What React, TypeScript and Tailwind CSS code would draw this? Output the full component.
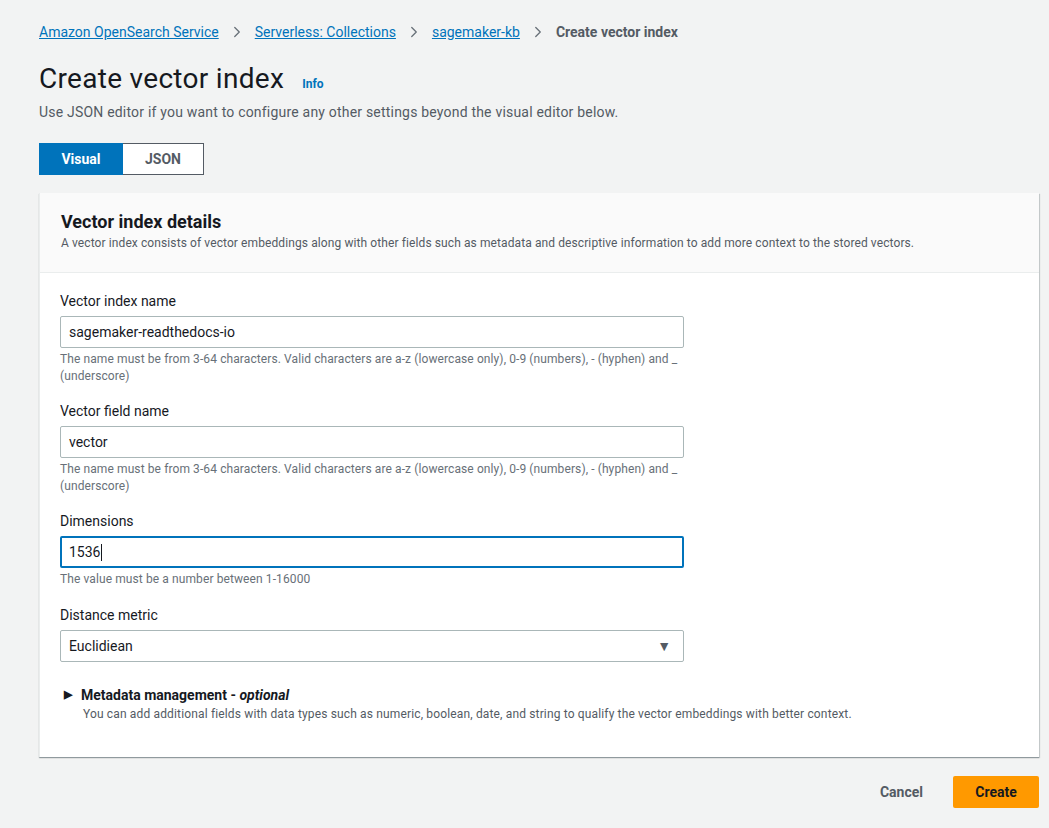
import { ChevronRight } from 'lucide-react';

type FieldProps = {
    label: string;
    value: string;
    hint?: string;
    focused?: boolean;
    select?: boolean;
};

const HINT =
    'The name must be from 3-64 characters. Valid characters are a-z (lowercase only), 0-9 (numbers), - (hyphen) and _ (underscore)';

function Field(props: FieldProps) {
    const { label, value, hint, focused, select } = props;
    return (
        <div className="flex flex-col">
            <label className="text-[14px] leading-[22px] text-[#16191f]">{label}</label>
            <div
                className={`mt-[4px] flex h-[32px] w-[624px] items-center justify-between rounded-[2px] bg-white pr-[12px] text-[14px] text-[#16191f] ${
                    focused ? 'border-2 border-[#0073bb] pl-[7px]' : 'border border-[#aab7b8] pl-[8px]'
                }`}
            >
                <span className="flex items-center">
                    {value}
                    {focused && <span className="ml-[1px] inline-block h-[17px] w-px bg-[#16191f]" />}
                </span>
                {select && <span className="text-[14px] text-[#545b64]">▼</span>}
            </div>
            {hint && (
                <p className="mt-[3px] w-[624px] text-[12px] leading-[17px] tracking-[0.1px] text-[#687078]">{hint}</p>
            )}
        </div>
    );
}

export default function App() {
    return (
        <div
            className="min-h-[828px] bg-[#f2f3f3] pl-[39px] pr-[10px] pt-[22px] text-[#16191f]"
            style={{ fontFamily: 'Roboto, "Liberation Sans", sans-serif' }}
        >
            <nav className="flex items-center gap-[9px] text-[14px] leading-[20px]">
                <a className="text-[#0073bb] underline">Amazon OpenSearch Service</a>
                <ChevronRight size={18} strokeWidth={1.75} className="text-[#687078]" />
                <a className="text-[#0073bb] underline">Serverless: Collections</a>
                <ChevronRight size={18} strokeWidth={1.75} className="text-[#687078]" />
                <a className="text-[#0073bb] underline">sagemaker-kb</a>
                <ChevronRight size={18} strokeWidth={1.75} className="text-[#687078]" />
                <span className="font-bold text-[#545b64]">Create vector index</span>
            </nav>

            <div className="mt-[20px] flex items-baseline gap-[18px]">
                <h1 className="text-[28px] leading-[34px] font-normal tracking-[0.3px]">Create vector index</h1>
                <a className="text-[12px] font-bold text-[#0073bb]">Info</a>
            </div>
            <p className="mt-[6px] text-[14px] leading-[20px] tracking-[0.2px] text-[#545b64]">
                Use JSON editor if you want to configure any other settings beyond the visual editor below.
            </p>

            <div className="mt-[21px] flex w-fit">
                <button className="h-[32px] w-[84px] border border-[#0073bb] bg-[#0073bb] text-[14px] font-bold text-white">
                    Visual
                </button>
                <button className="h-[32px] w-[81px] border border-l-0 border-[#545b64] bg-white text-[14px] font-bold text-[#545b64]">
                    JSON
                </button>
            </div>

            <div className="mt-[18px] border-l border-[#eaeded] bg-white shadow-[0_1px_1px_0_rgba(0,28,36,0.3),1px_1px_1px_0_rgba(0,28,36,0.15)]">
                <div className="border-b border-[#eaeded] bg-[#fafafa] px-[21px] pt-[18px] pb-[20px]">
                    <h2 className="text-[18px] leading-[22px] font-bold">Vector index details</h2>
                    <p className="mt-[1px] text-[12px] leading-[18px] tracking-[0.1px] text-[#545b64]">
                        A vector index consists of vector embeddings along with other fields such as metadata and
                        descriptive information to add more context to the stored vectors.
                    </p>
                </div>

                <div className="flex flex-col gap-[15px] px-[20px] pt-[17px] pb-[34px]">
                    <Field label="Vector index name" value="sagemaker-readthedocs-io" hint={HINT} />
                    <Field label="Vector field name" value="vector" hint={HINT} />
                    <Field label="Dimensions" value="1536" hint="The value must be a number between 1-16000" focused />
                    <div className="mt-[1px]">
                        <Field label="Distance metric" value="Euclidiean" select />
                    </div>

                    <div className="mt-[8px] pl-[4px]">
                        <div className="flex items-center gap-[9px] text-[14px] leading-[20px] font-bold text-[#16191f]">
                            <span className="text-[11px]">▶</span>
                            <span>
                                Metadata management - <i>optional</i>
                            </span>
                        </div>
                        <p className="pl-[19px] text-[12px] leading-[18px] tracking-[0.15px] text-[#545b64]">
                            You can add additional fields with data types such as numeric, boolean, date, and string to
                            qualify the vector embeddings with better context.
                        </p>
                    </div>
                </div>
            </div>

            <div className="mt-[19px] flex items-center justify-end gap-[10px]">
                <button className="h-[32px] px-[20px] text-[14px] font-bold text-[#545b64]">Cancel</button>
                <button className="h-[32px] w-[86px] rounded-[2px] bg-[#ff9900] text-[14px] font-bold text-[#16191f]">
                    Create
                </button>
            </div>
        </div>
    );
}
